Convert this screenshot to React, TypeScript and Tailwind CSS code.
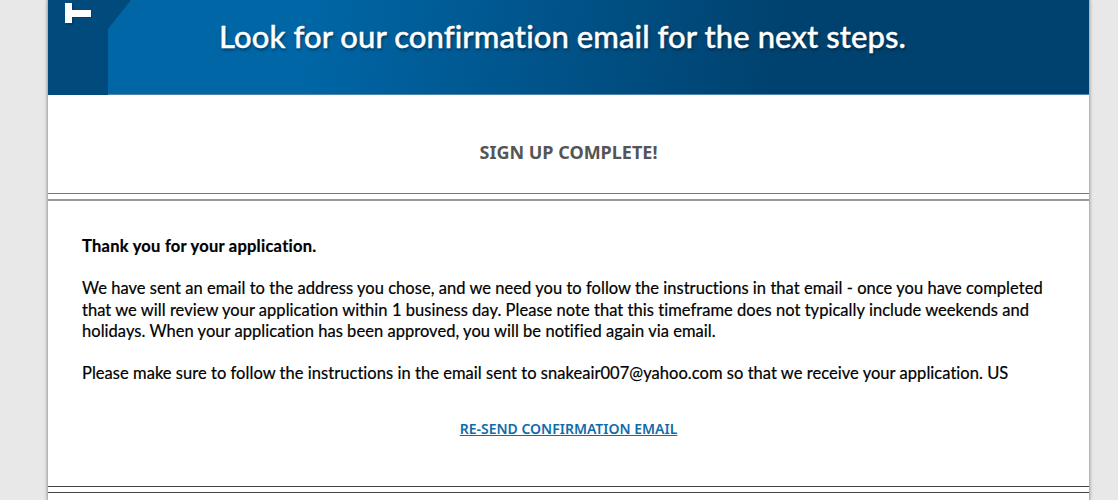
export default function App() {
  return (
    <div className="h-[500px] overflow-hidden bg-[#e8e8e8] font-['Lato',sans-serif]">
      <div className="ml-[47px] h-[500px] w-[1043px] overflow-hidden border-x border-[#b5b5b5] bg-white shadow-[0_0_3px_rgba(0,0,0,0.35)]">
        <div className="relative flex h-[95px] items-center justify-center border-b border-[#4f86ad] bg-[linear-gradient(100deg,#0066a6_0%,#0066a6_25%,#00426f_70%,#00426f_100%)]">
          <svg className="absolute left-0 top-0 h-[95px] w-[90px]" viewBox="0 0 90 95">
            <path d="M0 0H83L60 29V95H0Z" fill="#004a7c" />
            <path d="M18 4H26V25H18Z M26 11H44V18H26Z" fill="#00335a" opacity="0.5" />
            <path d="M17 3H24V23H17Z M24 10H43V17H24Z" fill="#fff" />
          </svg>
          <h1 className="relative mr-[12px] pb-[21px] text-[31px] font-medium tracking-[0.08px] text-white [-webkit-text-stroke:0.4px_white] [text-shadow:1px_2px_3px_rgba(0,0,0,0.45)]">
            Look for our confirmation email for the next steps.
          </h1>
        </div>

        <h2 className="flex h-[98px] items-center justify-center pt-[17px] font-['Noto_Sans',sans-serif] text-[18px] font-bold text-[#555]">
          SIGN UP COMPLETE!
        </h2>

        <div className="flex h-[8px] flex-col justify-between">
          <div className="h-px bg-[#777]" />
          <div className="h-[2px] bg-[#999]" />
        </div>

        <div className="px-[34px] pt-[35px] text-[16.5px] leading-[21.3px] tracking-[0.04px] text-black [-webkit-text-stroke:0.2px_black]">
          <p className="font-bold tracking-[0.25px]">Thank you for your application.</p>
          <p className="mt-[21px]">
            We have sent an email to the address you chose, and we need you to follow the instructions in that email - once you have completed that we will review your application within 1 business day. Please note that this timeframe does not typically include weekends and holidays. When your application has been approved, you will be notified again via email.
          </p>
          <p className="mt-[21px]">
            Please make sure to follow the instructions in the email sent to snakeair007@yahoo.com so that we receive your application. US
          </p>
          <div className="mt-[34px] text-center">
            <a href="#" className="font-['Noto_Sans',sans-serif] text-[14px] font-semibold tracking-normal text-[#0e6cab] underline [-webkit-text-stroke:0]">
              RE-SEND CONFIRMATION EMAIL
            </a>
          </div>
        </div>

        <div className="mt-[46px] flex h-[7px] flex-col justify-between">
          <div className="h-px bg-[#444]" />
          <div className="h-px bg-[#444]" />
        </div>
      </div>
    </div>
  );
}
